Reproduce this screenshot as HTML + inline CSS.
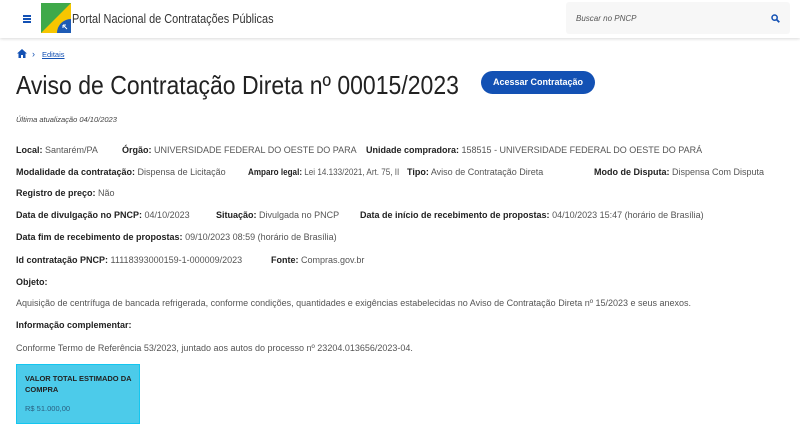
<!DOCTYPE html>
<html><head><meta charset="utf-8"><style>
body{margin:0;width:800px;height:431px;background:#fff;font-family:"Liberation Sans",sans-serif;color:#333;position:relative;overflow:hidden}
.hdr{position:absolute;left:0;top:0;width:800px;height:38px;background:#fff;box-shadow:0 1px 3px rgba(0,0,0,.15)}
.a{position:absolute;white-space:nowrap;font-size:9px;line-height:12px}
.a b{color:#222}
.v{color:#555}
</style></head><body>
<div class="hdr">
 <div style="position:absolute;left:23px;top:15px;width:8px;height:1.5px;background:#1351b4;box-shadow:0 3px 0 #1351b4,0 6px 0 #1351b4"></div>
 <svg style="position:absolute;left:41px;top:3px" width="30" height="30" viewBox="0 0 30 30">
  <rect width="30" height="30" fill="#f7c600"/>
  <polygon points="0,0 30,0 0,30" fill="#3fa94a"/>
  <path d="M30 16 A14 14 0 0 0 16 30 L30 30Z" fill="#1e5bb5"/>
  <path d="M22 22 l4 4 M22 22 l0 3 M22 22 l3 0" stroke="#fff" stroke-width="1"/>
 </svg>
 <div class="a" style="left:72px;top:11px;font-size:13px;line-height:16px;color:#333;transform:scaleX(0.84);transform-origin:0 0">Portal Nacional de Contratações Públicas</div>
 <div style="position:absolute;left:566px;top:2px;width:224px;height:32px;background:#f7f7f7;border-radius:3px"></div>
 <div class="a" style="left:576px;top:13px;font-size:8px;font-style:italic;color:#555">Buscar no PNCP</div>
 <svg style="position:absolute;left:771px;top:14px" width="9" height="9" viewBox="0 0 9 9"><circle cx="3.6" cy="3.6" r="2.6" fill="none" stroke="#1351b4" stroke-width="1.5"/><path d="M5.5 5.5L8.3 8.3" stroke="#1351b4" stroke-width="1.8"/></svg>
</div>
<svg style="position:absolute;left:17px;top:49px" width="10" height="9" viewBox="0 0 10 9"><path d="M5 0L0 4.5h1.5V9h2.5V6h2v3h2.5V4.5H10Z" fill="#1351b4"/></svg>
<div class="a" style="left:32px;top:48px;font-size:9px;color:#1351b4">›</div>
<div class="a" style="left:42px;top:49px;font-size:7.5px;color:#1351b4;text-decoration:underline">Editais</div>
<div class="a" style="left:16px;top:70px;font-size:26px;line-height:30px;color:#222;transform:scaleX(0.885);transform-origin:0 0">Aviso de Contratação Direta nº 00015/2023</div>
<div style="position:absolute;left:481px;top:71px;width:114px;height:23px;background:#1351b4;border-radius:12px;color:#fff;font-size:9px;font-weight:bold;text-align:center;line-height:23px">Acessar Contratação</div>
<div class="a" style="left:16px;top:114px;font-size:7.5px;font-style:italic;color:#444">Última atualização 04/10/2023</div>

<div class="a" style="left:16px;top:144px"><b>Local:</b> <span class="v">Santarém/PA</span></div>
<div class="a" style="left:122px;top:144px"><b>Órgão:</b> <span class="v">UNIVERSIDADE FEDERAL DO OESTE DO PARA</span></div>
<div class="a" style="left:366px;top:144px"><b>Unidade compradora:</b> <span class="v">158515 - UNIVERSIDADE FEDERAL DO OESTE DO PARÁ</span></div>

<div class="a" style="left:16px;top:166px"><b>Modalidade da contratação:</b> <span class="v">Dispensa de Licitação</span></div>
<div class="a" style="left:248px;top:166px;transform:scaleX(0.9);transform-origin:0 0"><b>Amparo legal:</b> <span class="v">Lei 14.133/2021, Art. 75, II</span></div>
<div class="a" style="left:407px;top:166px"><b>Tipo:</b> <span class="v">Aviso de Contratação Direta</span></div>
<div class="a" style="left:594px;top:166px"><b>Modo de Disputa:</b> <span class="v">Dispensa Com Disputa</span></div>

<div class="a" style="left:16px;top:187px"><b>Registro de preço:</b> <span class="v">Não</span></div>

<div class="a" style="left:16px;top:209px"><b>Data de divulgação no PNCP:</b> <span class="v">04/10/2023</span></div>
<div class="a" style="left:216px;top:209px"><b>Situação:</b> <span class="v">Divulgada no PNCP</span></div>
<div class="a" style="left:360px;top:209px"><b>Data de início de recebimento de propostas:</b> <span class="v">04/10/2023 15:47 (horário de Brasília)</span></div>

<div class="a" style="left:16px;top:231px"><b>Data fim de recebimento de propostas:</b> <span class="v">09/10/2023 08:59 (horário de Brasília)</span></div>

<div class="a" style="left:16px;top:254px"><b>Id contratação PNCP:</b> <span class="v">11118393000159-1-000009/2023</span></div>
<div class="a" style="left:271px;top:254px"><b>Fonte:</b> <span class="v">Compras.gov.br</span></div>

<div class="a" style="left:16px;top:276px"><b>Objeto:</b></div>
<div class="a v" style="left:16px;top:297px">Aquisição de centrífuga de bancada refrigerada, conforme condições, quantidades e exigências estabelecidas no Aviso de Contratação Direta nº 15/2023 e seus anexos.</div>
<div class="a" style="left:16px;top:319px"><b>Informação complementar:</b></div>
<div class="a v" style="left:16px;top:342px">Conforme Termo de Referência 53/2023, juntado aos autos do processo nº 23204.013656/2023-04.</div>

<div style="position:absolute;left:16px;top:364px;width:122px;height:58px;background:#4ccbea;border:1px solid #14c6f0"></div>
<div class="a" style="left:25px;top:373px;font-size:7.5px;line-height:11px;font-weight:bold;color:#222">VALOR TOTAL ESTIMADO DA<br>COMPRA</div>
<div class="a" style="left:25px;top:403px;font-size:7.5px;color:#2a5f80">R$ 51.000,00</div>
</body></html>
